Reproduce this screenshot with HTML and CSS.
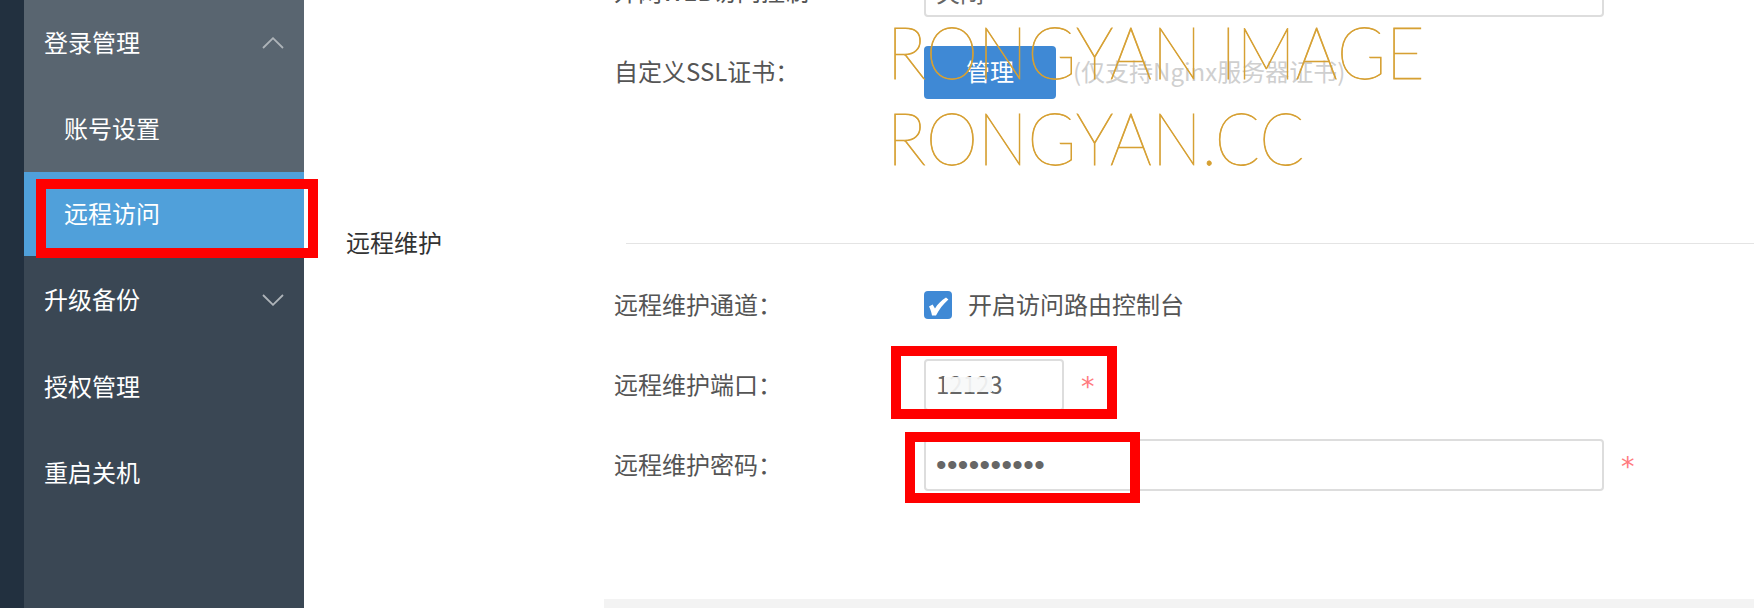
FILE: index.html
```html
<!DOCTYPE html>
<html lang="zh-CN">
<head>
<meta charset="utf-8">
<title>远程访问</title>
<link rel="stylesheet" href="styles.css">
</head>
<body>
<div class="page">
  <div class="rail"></div>
  <nav class="sidenav">
    <div class="nav-open">
      <div class="nav-item"><span>登录管理</span>
        <svg class="chev" viewBox="0 0 22 12" width="22" height="12"><path d="M1 11 L11 1.2 L21 11"/></svg>
      </div>
      <div class="nav-item nav-sub"><span>账号设置</span></div>
    </div>
    <div class="nav-item nav-sub nav-active"><span>远程访问</span></div>
    <div class="nav-rest">
      <div class="nav-item nav-tall"><span>升级备份</span>
        <svg class="chev" viewBox="0 0 22 12" width="22" height="12"><path d="M1 1 L11 10.8 L21 1"/></svg>
      </div>
      <div class="nav-item"><span>授权管理</span></div>
      <div class="nav-item"><span>重启关机</span></div>
    </div>
  </nav>
  <main class="content">
    <div class="row row-clip">
      <label class="row-label">外网WEB访问控制</label>
      <input class="field field-wide" type="text" value="关闭">
    </div>
    <div class="row row-ssl">
      <label class="row-label">自定义SSL证书：</label>
      <button class="btn" type="button">管理</button>
      <span class="hint">(仅支持Nginx服务器证书)</span>
    </div>
    <div class="section-head">
      <span class="section-title">远程维护</span>
      <span class="section-line"></span>
    </div>
    <div class="row row-check">
      <label class="row-label">远程维护通道：</label>
      <span class="checkbox">
        <svg viewBox="0 0 28 28" width="28" height="28"><path d="M5 15.5 L8.6 13.6 L11 17.4 C13.6 13 17.4 9.4 22 6.4 L24.4 8.6 C19 13.4 15 18.6 12 24.6 L8 24.6 C7.4 21 6.4 18.2 5 15.5 Z"/></svg>
      </span>
      <span class="check-text">开启访问路由控制台</span>
    </div>
    <div class="row row-next">
      <label class="row-label">远程维护端口：</label>
      <div class="port-wrap">
        <input class="field field-port" type="text" value="12123">
        <span class="smudge"></span>
      </div>
      <span class="req">*</span>
    </div>
    <div class="row row-next">
      <label class="row-label">远程维护密码：</label>
      <input class="field field-wide field-pass" type="password" value="1234567890">
      <span class="req">*</span>
    </div>
    <div class="foot-strip"></div>
  </main>
  <div class="watermark">
    <div>RONGYAN IMAGE</div>
    <div>RONGYAN.CC</div>
  </div>
  <div class="mark mark-nav"></div>
  <div class="mark mark-port"></div>
  <div class="mark mark-pass"></div>
</div>
</body>
</html>
```
FILE: styles.css
```css
* { box-sizing: border-box; }
html, body { margin: 0; padding: 0; height: 608px; overflow: hidden; background: #fff; }
body { font-family: "Noto Sans CJK SC", "Liberation Sans", sans-serif; font-size: 24px; color: #555; }
.page { position: relative; display: flex; width: 1754px; height: 608px; overflow: hidden; }

.rail { flex: 0 0 24px; background: #22303f; }
.sidenav { flex: 0 0 280px; display: flex; flex-direction: column; color: #fff; background: #3a4754; }
.nav-open { background: #596570; }
.nav-item { height: 86px; padding: 0 20px 0 20px; display: flex; align-items: center; justify-content: space-between; line-height: 1; }
.nav-item span { padding-bottom: 3px; }
.nav-sub { padding-left: 40px; }
.nav-active { height: 84px; background: #50a0da; }
.nav-tall { height: 88px; }
.chev { display: block; }
.chev path { fill: none; stroke: #aeb4b9; stroke-width: 1.8; }

.content { flex: 1; min-width: 0; }
.row { display: flex; align-items: center; height: 52px; padding-left: 310px; }
.row-clip { margin-top: -35px; }
.row-clip .row-label { padding-bottom: 0; }
.row-clip .field { padding-bottom: 0; }
.row-ssl { margin-top: 29px; height: 53px; }
.row-check { margin-top: 10px; }
.row-next { margin-top: 28px; }
.row-label { flex: 0 0 310px; padding-bottom: 3px; color: #555; line-height: 1; white-space: nowrap; }

.field { height: 52px; padding: 0 10px 3px; font: inherit; color: #666; background: #fff; border: 2px solid #ddd; border-radius: 4px; outline: none; }
.field-wide { width: 680px; }
.field-port { width: 140px; display: block; }
.field-pass { padding-bottom: 0; font-family: "Liberation Sans", sans-serif; font-size: 30px; letter-spacing: .4px; }

.btn { width: 132px; height: 53px; padding: 0 0 4px; font: inherit; color: #fff; background: #3f89d5; border: 0; border-radius: 4px; }
.hint { margin-left: 17px; padding-bottom: 3px; color: #cfcfcf; line-height: 1; white-space: nowrap; }

.section-head { display: flex; align-items: center; height: 52px; margin-top: 118px; padding-left: 42px; }
.section-title { flex: 0 0 280px; padding-bottom: 2px; color: #333; line-height: 1; }
.section-line { flex: 1; height: 1px; background: #e4e4e4; }

.checkbox { width: 28px; height: 28px; border-radius: 4px; background: #3f89d5; }
.checkbox svg { display: block; }
.checkbox path { fill: #fff; }
.check-text { margin-left: 16px; padding-bottom: 3px; line-height: 1; color: #555; }

.port-wrap { position: relative; }
.smudge { position: absolute; left: 20px; top: 18px; width: 48px; height: 15px; background: rgba(247, 248, 248, .92); }
.req { margin-left: 17px; padding-top: 2px; color: #ff7b80; font-family: "DejaVu Sans", sans-serif; font-size: 27px; line-height: 1; }

.foot-strip { height: 9px; margin: 108px 0 0 300px; background: #f3f3f3; }

.watermark { position: absolute; left: 887px; top: 8px; color: #d6a033; font-family: "Lato", sans-serif; font-weight: 100; font-size: 72px; line-height: 86px; white-space: nowrap; -webkit-text-stroke: .8px #d6a033; transform: scaleX(.92); transform-origin: 0 0; pointer-events: none; }

.mark { position: absolute; border: 10px solid #f00; }
.mark-nav { left: 36px; top: 179px; width: 282px; height: 79px; }
.mark-port { left: 891px; top: 346px; width: 226px; height: 73px; }
.mark-pass { left: 905px; top: 432px; width: 235px; height: 71px; }
```
